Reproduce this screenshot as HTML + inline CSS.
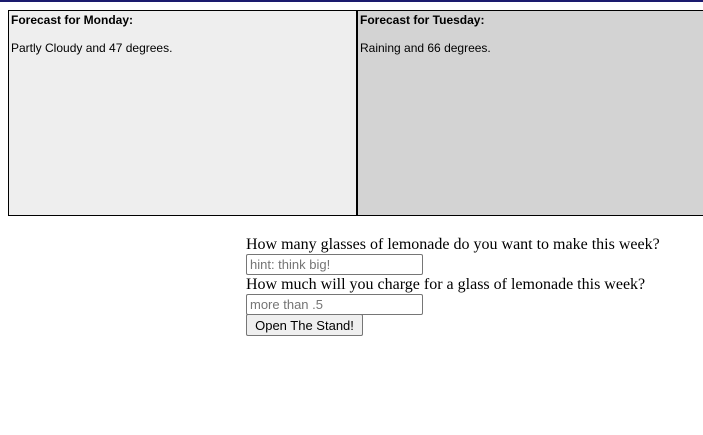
<!DOCTYPE html>
<html><head><style>
html,body{margin:0;padding:0;width:703px;height:435px;overflow:hidden;background:#fff}
.bar{position:absolute;left:0;top:0;width:703px;height:2px;background:#1a1a6e}
.box{position:absolute;top:10px;border:1px solid #000;font-family:"Liberation Sans",Arial,sans-serif;font-size:12px;color:#000;box-sizing:border-box;height:206px}
.box h4{margin:0;position:absolute;left:2px;top:2px;font-size:12px;font-weight:bold}
.box p{margin:0;position:absolute;left:2px;top:30px;font-size:12px}
.l{left:8px;width:349px;background:#eee}
.r{left:357px;width:360px;background:#d3d3d3}
.f{position:absolute;left:246px;top:236px;font-family:"Liberation Serif","Times New Roman",serif;font-size:16px;line-height:18px;color:#000}
.q{height:18px;line-height:18px}
.in{width:177px;height:21px;box-sizing:border-box;border:1px solid #767676;border-radius:2px;font-family:"Liberation Sans",Arial,sans-serif;font-size:13px;color:#757575;padding:2px 3px;line-height:15px;margin-bottom:1px}
.btn{display:block;width:117px;height:22px;box-sizing:border-box;border:1px solid #767676;border-radius:2px;background:#efefef;font-family:"Liberation Sans",Arial,sans-serif;font-size:13px;padding:3px 0;text-align:center;line-height:15px;margin-top:-1px}
</style></head><body>
<div class="bar"></div>
<div class="box l"><h4>Forecast for Monday:</h4><p>Partly Cloudy and 47 degrees.</p></div>
<div class="box r"><h4>Forecast for Tuesday:</h4><p>Raining and 66 degrees.</p></div>
<div class="f">
<div class="q">How many glasses of lemonade do you want to make this week?</div>
<div class="in">hint: think big!</div>
<div class="q" style="margin-top:1px">How much will you charge for a glass of lemonade this week?</div>
<div class="in" style="margin-bottom:0">more than .5</div>
<div class="btn">Open The Stand!</div>
</div>
</body></html>
